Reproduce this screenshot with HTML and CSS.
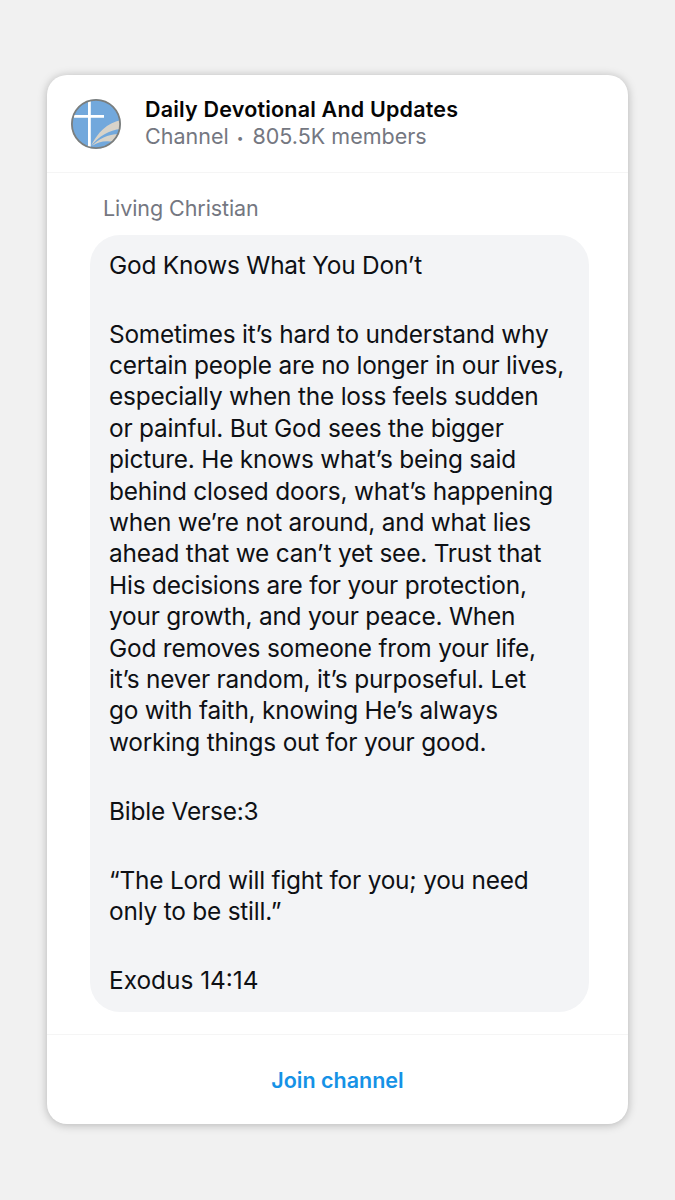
FILE: index.html
```html
<!DOCTYPE html>
<html lang="en">
<head>
  <meta charset="UTF-8">
  <title>Daily Devotional And Updates</title>
  <link rel="stylesheet" href="styles.css">
</head>
<body>

  <div class="card">
    <header>
      <svg class="logo" viewBox="0 0 50 50">
        <clipPath id="circle"><circle cx="25" cy="25" r="24.5"/></clipPath>
        <g clip-path="url(#circle)">
          <rect width="50" height="50" fill="#72a8dc"/>
          <path d="M20 47 C26 34 36 24 50 21 V30 C38 31 28 37 20 47Z" fill="#d8d3c9"/>
          <path d="M21 47 C27 40 37 35 48 35 L43 43 C34 41 27 43 21 47Z" fill="#d8d3c9"/>
          <path d="M18.4 2 V48 M3 17.3 H33" stroke="#fff" stroke-width="2.8" fill="none"/>
        </g>
        <circle cx="25" cy="25" r="24.1" fill="none" stroke="#7b7e7d" stroke-width="1.8"/>
      </svg>
      <div>
        <h1>Daily Devotional And Updates</h1>
        <p class="members">Channel <span class="dot">•</span> 805.5K members</p>
      </div>
    </header>

    <main>
      <p class="author">Living Christian</p>
      <div class="message">
        <p>God Knows What You Don’t</p>
        <p>Sometimes it’s hard to understand why<br>
        certain people are no longer in our lives,<br>
        especially when the loss feels sudden<br>
        or painful. But God sees the bigger<br>
        picture. He knows what’s being said<br>
        behind closed doors, what’s happening<br>
        when we’re not around, and what lies<br>
        ahead that we can’t yet see. Trust that<br>
        His decisions are for your protection,<br>
        your growth, and your peace. When<br>
        God removes someone from your life,<br>
        it’s never random, it’s purposeful. Let<br>
        go with faith, knowing He’s always<br>
        working things out for your good.</p>
        <p>Bible Verse:3</p>
        <p>“The Lord will fight for you; you need<br>
        only to be still.”</p>
        <p class="reference">Exodus 14:14</p>
      </div>
    </main>

    <footer>
      <a class="join">Join channel</a>
    </footer>
  </div>

</body>
</html>
```

FILE: styles.css
```css
* {
  box-sizing: border-box;
}

body {
  margin: 0;
  padding: 75px 47px 0;
  height: 1200px;
  background-color: #f1f1f1;
  font-family: Inter, "Liberation Sans", sans-serif;
  color: #0e1014;
}

h1, p {
  margin: 0;
  white-space: nowrap;
}

.card {
  display: flex;
  flex-direction: column;
  height: 1049px;
  background-color: #fff;
  border-radius: 20px;
  box-shadow: 0 1px 10px rgba(0,0,0,0.26);
}

header {
  display: flex;
  gap: 24px;
  height: 98px;
  padding: 21px 24px 0;
  border-bottom: 1px solid #f5f5f5;
}

.logo {
  width: 50px;
  height: 50px;
  margin-top: 3px;
}

h1 {
  font-size: 21.5px;
  line-height: 27px;
  font-weight: 600;
  letter-spacing: 0.19px;
  color: #050505;
}

.members {
  font-size: 21.5px;
  line-height: 27px;
  color: #747781;
}

.dot {
  font-size: 12px;
  margin: 0 3px 0 2px;
  vertical-align: 2px;
}

main {
  flex: 1;
  padding: 22px 39px 0 43px;
}

.author {
  padding-left: 13px;
  font-size: 21.5px;
  line-height: 27px;
  letter-spacing: -0.08px;
  color: #747781;
}

.message {
  display: flex;
  flex-direction: column;
  gap: 37.6px;
  height: 777px;
  margin-top: 13px;
  padding: 14.6px 19px 0;
  background-color: #f3f4f6;
  border-radius: 30px;
  font-size: 24.4px;
  line-height: 31.4px;
  letter-spacing: -0.2px;
}

.reference {
  letter-spacing: 0;
}

footer {
  display: flex;
  align-items: center;
  justify-content: center;
  height: 90px;
  border-top: 1px solid #f5f5f5;
}

.join {
  font-size: 21.5px;
  font-weight: 600;
  color: #1592e6;
}
```
